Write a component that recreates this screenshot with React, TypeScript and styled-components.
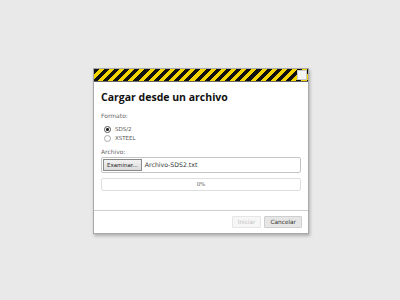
import React, { ReactElement, useState } from "react";
import styled, { createGlobalStyle } from "styled-components";

const GlobalStyle = createGlobalStyle`
    html, body {
        margin: 0;
        padding: 0;
        background: #e9e9e9;
    }
`;

const Page = styled.div`
    width: 100vw;
    height: 100vh;
    box-sizing: border-box;
    padding: 1px 0 0 2px;
    display: flex;
    align-items: center;
    justify-content: center;
`;

const Dialog = styled.div`
    width: 214px;
    height: 164px;
    background: #ffffff;
    border: 1px solid #a9a9a9;
    box-shadow: 1px 2px 3px rgba(0, 0, 0, 0.25);
    display: flex;
    flex-direction: column;
`;

const Header = styled.div`
    height: 12px;
    flex-shrink: 0;
    border-bottom: 1px solid #666;
    background: repeating-linear-gradient(135deg, #111 0px, #111 3.6px, #f3d400 3.6px, #f3d400 7.2px);
    display: flex;
    justify-content: flex-end;
    align-items: center;
    padding-right: 1px;
`;

const CloseBox = styled.div`
    width: 8px;
    height: 8px;
    background: #f4f4f4;
    border: 1px solid #c9c9c9;
`;

const Body = styled.div`
    flex: 1;
    padding: 7px 7px 0 7px;
    display: flex;
    flex-direction: column;
`;

const Title = styled.h1`
    margin: 0;
    font-family: "Open Sans", sans-serif;
    font-weight: 700;
    font-size: 10.5px;
    line-height: 16px;
    color: #111;
`;

const Label = styled.div<{ top: number }>`
    margin-top: ${p => p.top}px;
    font-family: "DejaVu Sans", Verdana, sans-serif;
    font-size: 6px;
    line-height: 9px;
    color: #666;
`;

const Options = styled.div`
    margin-top: 6px;
    padding-left: 3px;
    display: flex;
    flex-direction: column;
    gap: 2px;
`;

const Option = styled.label`
    display: flex;
    align-items: center;
    gap: 4px;
    font-family: "DejaVu Sans", Verdana, sans-serif;
    font-size: 5.5px;
    line-height: 7px;
    color: #555;
`;

const Radio = styled.span<{ checked: boolean }>`
    width: 5px;
    height: 5px;
    border-radius: 50%;
    border: 1px solid ${p => (p.checked ? "#555" : "#aaa")};
    background: ${p => (p.checked ? "radial-gradient(circle, #222 0 1.3px, #fff 1.6px)" : "#fff")};
`;

const FileField = styled.div`
    margin-top: 1px;
    height: 14px;
    border: 1px solid #c4c4c4;
    border-radius: 2px;
    display: flex;
    align-items: center;
    padding-left: 1px;
    gap: 3px;
`;

const BrowseButton = styled.div`
    height: 10px;
    padding: 0 3px;
    border: 1px solid #8a8a8a;
    background: linear-gradient(#f2f2f2, #dcdcdc);
    font-family: "DejaVu Sans", Verdana, sans-serif;
    font-size: 5.5px;
    line-height: 10px;
    color: #222;
`;

const FileName = styled.span`
    font-family: "DejaVu Sans", Verdana, sans-serif;
    font-size: 6.2px;
    color: #333;
`;

const Progress = styled.div`
    margin-top: 5px;
    height: 11px;
    border: 1px solid #dedede;
    border-radius: 2px;
    display: flex;
    align-items: center;
    justify-content: center;
    font-family: "DejaVu Sans", Verdana, sans-serif;
    font-size: 5.5px;
    color: #666;
`;

const Footer = styled.div`
    height: 22px;
    flex-shrink: 0;
    border-top: 1px solid #cfcfcf;
    display: flex;
    justify-content: flex-end;
    align-items: center;
    gap: 3px;
    padding-right: 6px;
`;

const Button = styled.div<{ disabled?: boolean }>`
    height: 10px;
    padding: 0 5px;
    border: 1px solid ${p => (p.disabled ? "#e6e6e6" : "#cfcfcf")};
    border-radius: 1px;
    background: ${p => (p.disabled ? "#f6f6f6" : "#e6e6e6")};
    font-family: "DejaVu Sans", Verdana, sans-serif;
    font-size: 5.8px;
    line-height: 10px;
    color: ${p => (p.disabled ? "#c4c4c4" : "#333")};
`;

export default function App(): ReactElement {
    const [format, setFormat] = useState("SDS/2");
    const formats = ["SDS/2", "XSTEEL"];

    return (
        <Page>
            <GlobalStyle />
            <Dialog>
                <Header>
                    <CloseBox />
                </Header>
                <Body>
                    <Title>Cargar desde un archivo</Title>
                    <Label top={6}>Formato:</Label>
                    <Options>
                        {formats.map(f => (
                            <Option key={f} onClick={() => setFormat(f)}>
                                <Radio checked={format === f} />
                                {f}
                            </Option>
                        ))}
                    </Options>
                    <Label top={5}>Archivo:</Label>
                    <FileField>
                        <BrowseButton>Examinar...</BrowseButton>
                        <FileName>Archivo-SDS2.txt</FileName>
                    </FileField>
                    <Progress>0%</Progress>
                </Body>
                <Footer>
                    <Button disabled>Iniciar</Button>
                    <Button>Cancelar</Button>
                </Footer>
            </Dialog>
        </Page>
    );
}
